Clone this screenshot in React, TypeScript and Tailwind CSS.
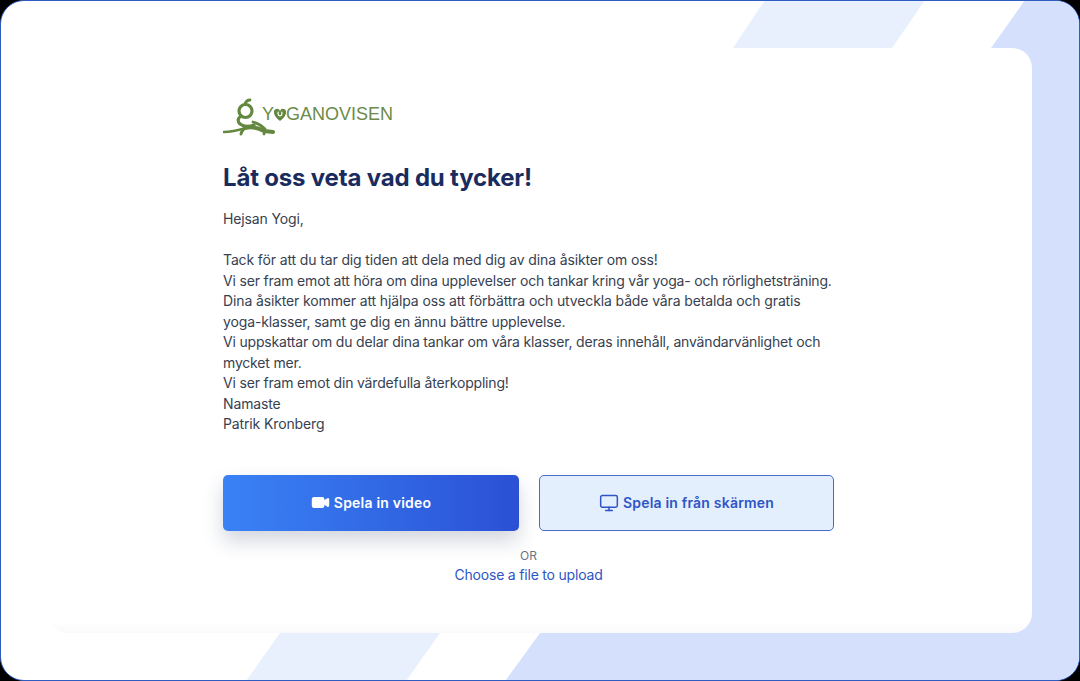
import { Monitor, Video } from 'lucide-react';

const Logo = () => (
  <div className="flex items-start h-[42px]">
    <svg width="52" height="42" viewBox="0 0 52 42" fill="none" stroke="#64883f" strokeLinecap="round" strokeLinejoin="round" className="shrink-0">
      <path d="M27 4c-2 0-4 1-5 4" strokeWidth="2.800" />
      <circle cx="22.500" cy="15" r="6.500" strokeWidth="3.200" />
      <path d="M18 20c-3 2-4 5-1 8 4 3 9 3 14 1" strokeWidth="3.200" />
      <path d="M1 36c8 0 15-2 22-4" strokeWidth="2.600" />
      <path d="M22 32c7-2 13 0 19 3l9 1" strokeWidth="4" />
      <path d="M18 38c1-4 3-6 7-7" strokeWidth="3" />
      <path d="M30 26c4 1 9 4 12 7l-1 5" strokeWidth="2.800" />
    </svg>
    <span className="font-['Liberation_Sans',sans-serif] text-[18px] leading-none text-[#6c8a4a] flex items-center -ml-[13px] mt-[9px]">
      Y
      <svg width="14" height="15" viewBox="0 0 15 15" className="shrink-0 -mx-[1px]">
        <path d="M7.500 14.500C3 11 1 8 1 5a3.300 3.300 0 0 1 6.500-1A3.300 3.300 0 0 1 14 5c0 3-2 6-6.500 9.500z" fill="#64883f" />
        <path d="M5.500 5v2a2 2 0 0 0 4 0V5" fill="none" stroke="#fff" strokeWidth="1.300" strokeLinecap="round" />
      </svg>
      GANOVISEN
    </span>
  </div>
);

export default function App() {
  return (
    <div className="w-[1080px] h-[681px] bg-black overflow-hidden font-['Inter',sans-serif]">
      <div className="relative w-full h-full bg-white rounded-[24px] border border-[#2f5cc0] overflow-hidden">
        <svg className="absolute -left-px -top-px" width="1080" height="681" viewBox="0 0 1080 681">
          <polygon points="733,48 765,0 925,0 892,48" fill="#e8effd" />
          <polygon points="246,681 280,633 440,633 406,681" fill="#e8effd" />
          <polygon points="991,48 1025,0 1080,0 1080,681 505,681 540,633 991,633" fill="#d5e1fc" />
        </svg>
        <div className="absolute left-[47px] top-[47px] w-[984px] h-[585px] bg-gradient-to-b from-white from-[98%] to-[#fafafb] rounded-[20px] pl-[175px] pt-[48px]">
          <div className="w-[611px] flex flex-col">
            <Logo />
            <h1 className="mt-[24px] text-[24px] leading-[32px] font-bold tracking-[-0.18px] text-[#1a2c5e]">Låt oss veta vad du tycker!</h1>
            <div className="mt-[15px] text-[14px] leading-[20.5px] tracking-[-0.13px] text-[#374151]">
              <p>Hejsan Yogi,</p>
              <p className="mt-[20.500px]">Tack för att du tar dig tiden att dela med dig av dina åsikter om oss!</p>
              <p className="tracking-[-0.18px]">Vi ser fram emot att höra om dina upplevelser och tankar kring vår yoga- och rörlighetsträning.</p>
              <p>Dina åsikter kommer att hjälpa oss att förbättra och utveckla både våra betalda och gratis yoga-klasser, samt ge dig en ännu bättre upplevelse.</p>
              <p className="tracking-[-0.18px]">Vi uppskattar om du delar dina tankar om våra klasser, deras innehåll, användarvänlighet och mycket mer.</p>
              <p className="tracking-[-0.18px]">Vi ser fram emot din värdefulla återkoppling!</p>
              <p>Namaste</p>
              <p>Patrik Kronberg</p>
            </div>
            <div className="mt-[40px] flex gap-[20px]">
              <button className="w-[296px] h-[56px] rounded-[5px] bg-gradient-to-r from-[#3b82f6] to-[#2b50d4] text-white text-[14px] tracking-[0.2px] font-semibold flex items-center justify-center gap-[4px] shadow-[0_10px_20px_rgba(30,50,90,0.2)]">
                <Video size={19} fill="currentColor" strokeWidth={2} />
                Spela in video
              </button>
              <button className="w-[295px] h-[56px] rounded-[5px] bg-[#e4effe] border border-[#4a6bc9] text-[#2f55c4] text-[14px] tracking-[0.2px] font-semibold flex items-center justify-center gap-[4px]">
                <Monitor size={20} strokeWidth={1.8} />
                Spela in från skärmen
              </button>
            </div>
            <div className="mt-[17px] text-center text-[12px] leading-[16px] text-[#6b7280]">OR</div>
            <div className="mt-[1px] text-center text-[14px] leading-[20px] tracking-[-0.2px] text-[#2f55c4]">Choose a file to upload</div>
          </div>
        </div>
      </div>
    </div>
  );
}
